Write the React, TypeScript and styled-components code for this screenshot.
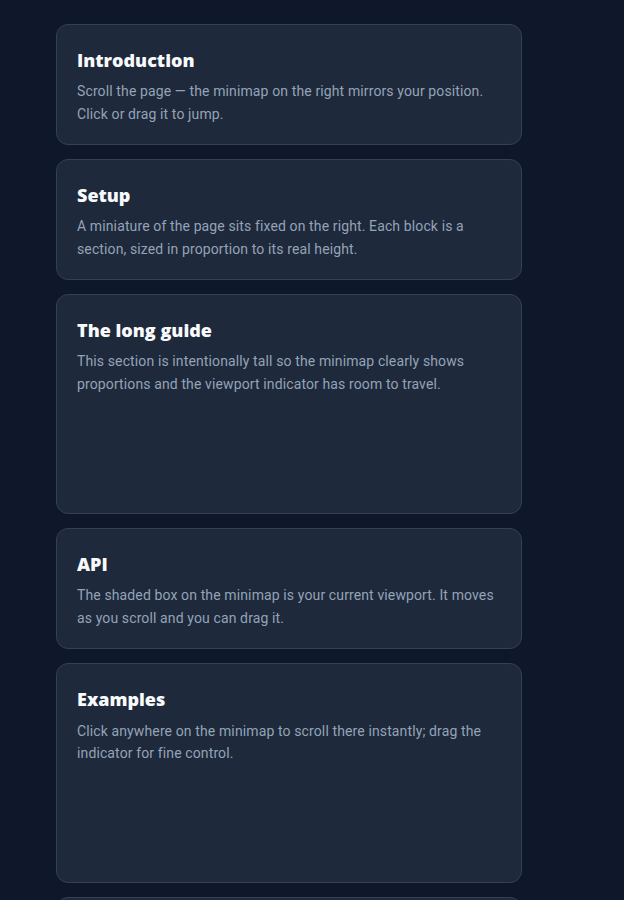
import React from 'react';
import styled, { createGlobalStyle } from 'styled-components';

const GlobalStyle = createGlobalStyle`
    * {
        box-sizing: border-box;
    }

    html, body {
        margin: 0;
        padding: 0;
        background: #0f172a;
    }

    body {
        font-family: "Segoe UI", Roboto, "Noto Sans", sans-serif;
        color: #e2e8f0;
    }
`

const Page = styled.main`
    display: flex;
    flex-flow: column nowrap;
    gap: 14px;
    width: 466px;
    margin-left: 56px;
    padding: 24px 0;
`

const Section = styled.section<{ $tall?: boolean }>`
    background: #1e293b;
    border: 1px solid #334155;
    border-radius: 12px;
    padding: 23px 20px 19px;
    min-height: ${(p) => (p.$tall ? '220px' : '120px')};

    h2 {
        margin: 0 0 8px;
        font-family: "Open Sans", "Segoe UI", sans-serif;
        font-size: 18px;
        font-weight: 800;
        color: #f8fafc;
        line-height: 1.35;
    }

    p {
        margin: 0;
        font-size: 14px;
        line-height: 1.6;
        letter-spacing: 0.12px;
        color: #94a3b8;
    }
`

const sections = [
    {
        title: 'Introduction',
        text: 'Scroll the page — the minimap on the right mirrors your position. Click or drag it to jump.',
    },
    {
        title: 'Setup',
        text: 'A miniature of the page sits fixed on the right. Each block is a section, sized in proportion to its real height.',
    },
    {
        title: 'The long guide',
        text: 'This section is intentionally tall so the minimap clearly shows proportions and the viewport indicator has room to travel.',
        tall: true,
    },
    {
        title: 'API',
        text: 'The shaded box on the minimap is your current viewport. It moves as you scroll and you can drag it.',
    },
    {
        title: 'Examples',
        text: 'Click anywhere on the minimap to scroll there instantly; drag the indicator for fine control.',
        tall: true,
    },
    {
        title: 'FAQ',
        text: 'The minimap updates when the window is resized, so the proportions always stay accurate.',
    },
]

export default function App() {
    return (
        <>
            <GlobalStyle />
            <Page>
                {sections.map((s) => (
                    <Section key={s.title} $tall={s.tall}>
                        <h2>{s.title}</h2>
                        <p>{s.text}</p>
                    </Section>
                ))}
            </Page>
        </>
    )
}
